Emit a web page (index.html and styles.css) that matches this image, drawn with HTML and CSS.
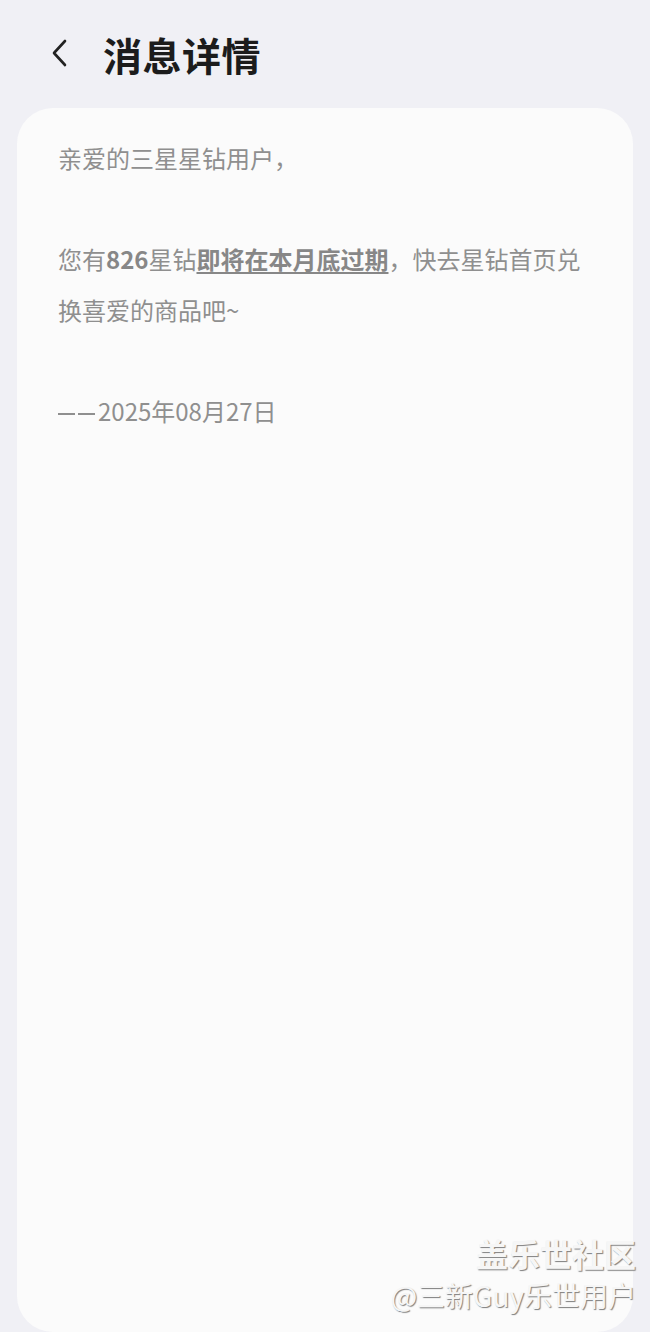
FILE: index.html
```html
<!DOCTYPE html>
<html lang="zh-CN">
<head>
    <meta charset="UTF-8">
    <meta name="viewport" content="width=device-width, initial-scale=1.0">
    <title>消息详情</title>
    <link rel="stylesheet" href="styles.css">
</head>
<body>
    <div class="header">
        <span class="back">
            <svg width="20" height="30" viewBox="0 0 20 30">
                <path d="M15 3 L4 15 L15 27" fill="none" stroke="#222" stroke-width="2.6" stroke-linecap="round" stroke-linejoin="round"/>
            </svg>
        </span>
        <h1>消息详情</h1>
    </div>
    <div class="card">
        <p class="message">亲爱的三星星钻用户，<br><br>您有<b>826</b>星钻<b class="warn">即将在本月底过期</b>，快去星钻首页兑换喜爱的商品吧~<br><br><span class="dash">—</span><span class="dash">—</span>2025年08月27日</p>
    </div>
    <div class="watermark">
        <div class="wm-title">盖乐世社区</div>
        <div class="wm-user">@三新Guy乐世用户</div>
    </div>
</body>
</html>
```

FILE: styles.css
```css
body {
    margin: 0;
    background: #f0f0f5;
    font-family: "Noto Sans CJK SC", "Noto Sans", sans-serif;
    height: 1332px;
    overflow: hidden;
    position: relative;
}
.header {
    height: 108px;
    display: flex;
    align-items: center;
    padding-left: 50px;
    box-sizing: border-box;
}
.back {
    display: flex;
    width: 20px;
    margin-right: 33px;
    margin-top: -2px;
}
h1 {
    margin: 0;
    font-size: 39px;
    font-weight: 700;
    color: #1c1c1c;
    letter-spacing: 0.5px;
}
.card {
    margin: 0 17px;
    height: 1224px;
    background: #fbfbfb;
    border-radius: 36px;
    padding: 25px 45px 0 41px;
    box-sizing: border-box;
}
.message {
    margin: 0;
    font-size: 24px;
    line-height: 50.5px;
    color: #8f8f8f;
}
.message b {
    font-weight: 700;
    color: #878787;
}
.warn {
    text-decoration: underline;
    text-underline-offset: 3px;
}
.dash {
    display: inline-block;
    width: 17px;
    height: 2px;
    margin-right: 3px;
    vertical-align: middle;
    background: #8f8f8f;
    color: transparent;
    overflow: hidden;
    line-height: 2px;
    font-size: 2px;
}
.watermark {
    position: absolute;
    right: 14px;
    bottom: 16px;
    text-align: right;
    color: #f6f6f6;
    text-shadow: 1px 1px 1px #7e7e7e;
}
.wm-title {
    font-size: 32px;
    font-weight: 700;
    line-height: 42px;
}
.wm-user {
    font-size: 28px;
    line-height: 42px;
}
```
